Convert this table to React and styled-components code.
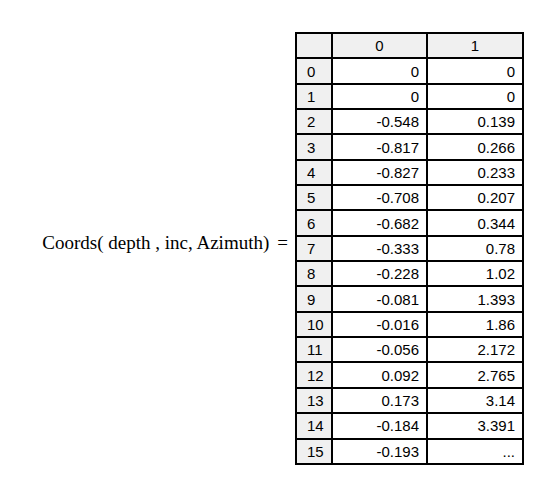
import React from 'react';
import styled, {createGlobalStyle} from 'styled-components';

const GlobalStyle = createGlobalStyle`
  body {
    margin: 0;
    padding: 0;
    background: #fff;
  }
  * {
    margin: 0;
    padding: 0;
    box-sizing: border-box;
  }
`
const Page = styled.div`
  width: 543px;
  height: 479px;
  display: flex;
  align-items: flex-start;
  padding-top: 32px;
  gap: 7px;
`
const Label = styled.div`
  width: 288px;
  height: 433px;
  display: flex;
  align-items: center;
  justify-content: flex-end;
  padding-bottom: 11px;
  font-family: "Liberation Serif", "Times New Roman", serif;
  font-size: 19px;
  color: #000;
  white-space: pre;
`
const Equals = styled.span`
  margin-left: 8px;
`
const Table = styled.div`
  display: grid;
  grid-template-columns: 34px 93px 94px;
  grid-template-rows: repeat(17, 23.35px);
  gap: 2px;
  padding: 2px;
  background: #000;
  font-family: "Liberation Sans", Arial, sans-serif;
  font-size: 15px;
  color: #000;
`
const Cell = styled.div`
  display: flex;
  align-items: center;
  background: ${p => (p.$head ? '#f0f0f0' : '#fff')};
  justify-content: ${p => p.$align === 'center' ? 'center' : p.$align === 'left' ? 'flex-start' : 'flex-end'};
  padding: ${p => p.$align === 'left' ? '0 0 0 10px' : p.$align === 'right' ? '0 7px 0 0' : '0'};
`

const rows = [
  ['0', '0'],
  ['0', '0'],
  ['-0.548', '0.139'],
  ['-0.817', '0.266'],
  ['-0.827', '0.233'],
  ['-0.708', '0.207'],
  ['-0.682', '0.344'],
  ['-0.333', '0.78'],
  ['-0.228', '1.02'],
  ['-0.081', '1.393'],
  ['-0.016', '1.86'],
  ['-0.056', '2.172'],
  ['0.092', '2.765'],
  ['0.173', '3.14'],
  ['-0.184', '3.391'],
  ['-0.193', '...'],
];

function App() {
  return (
    <Page>
      <GlobalStyle/>
      <Label>Coords( depth , inc, Azimuth)<Equals>=</Equals></Label>
      <Table>
        <Cell $head $align="center"></Cell>
        <Cell $head $align="center">0</Cell>
        <Cell $head $align="center">1</Cell>
        {rows.map((row, index) => (
          <React.Fragment key={index}>
            <Cell $head $align="left">{index}</Cell>
            <Cell $align="right">{row[0]}</Cell>
            <Cell $align="right">{row[1]}</Cell>
          </React.Fragment>
        ))}
      </Table>
    </Page>
  );
}

export default App;
